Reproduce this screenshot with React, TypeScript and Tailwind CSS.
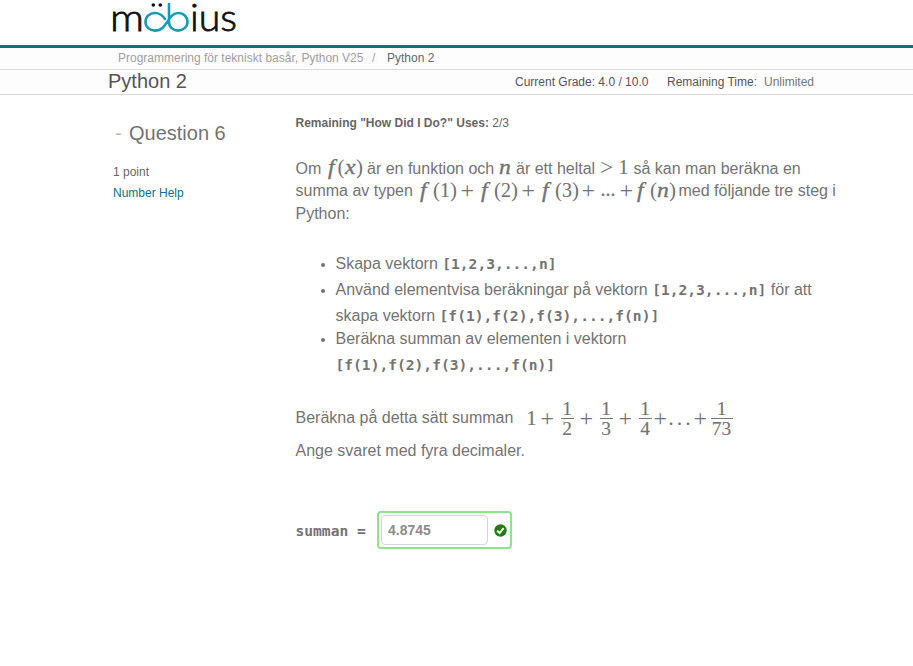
import React from "react";

type TokenProps = { w: string; children: React.ReactNode };

function M({ w, children }: TokenProps) {
  return (
    <span className={`inline-block shrink-0 font-['Liberation_Serif',serif] text-[20px] leading-[22px] [-webkit-text-stroke:0.15px_#737373] ${w}`}>
      {children}
    </span>
  );
}

function Variable({ w, children }: TokenProps) {
  return (
    <span className={`inline-block shrink-0 font-['Liberation_Serif',serif] text-[20px] leading-[22px] italic [-webkit-text-stroke:0.35px_#737373] ${w}`}>
      <span className="inline-block origin-left scale-x-[1.18]">{children}</span>
    </span>
  );
}

function Plus({ w }: { w: string }) {
  return (
    <span className={`inline-block shrink-0 font-['Liberation_Serif',serif] text-[24px] leading-[22px] ${w}`}>+</span>
  );
}

function Paren({ w, children }: TokenProps) {
  return (
    <span className={`inline-block shrink-0 font-['Liberation_Serif',serif] text-[21px] leading-[22px] ${w}`}>
      {children}
    </span>
  );
}

function Greater() {
  return (
    <span className="inline-block w-[18.5px] shrink-0 translate-y-[1px] font-['Liberation_Serif',serif] text-[23px] leading-[22px]">&gt;</span>
  );
}

function Code({ children }: { children: React.ReactNode }) {
  return (
    <code className="font-['DejaVu_Sans_Mono',monospace] text-[14.6px] font-bold">{children}</code>
  );
}

function Call({ arg, variable = false, w }: { arg: string; variable?: boolean; w: string }) {
  return (
    <span className={`inline-flex shrink-0 translate-y-[0.5px] items-baseline ${w}`}>
      <Variable w="w-[14.5px] pl-px">f</Variable>
      <Paren w="w-[7px]">(</Paren>
      {variable ? <Variable w="w-[12px]">{arg}</Variable> : <M w="w-[10px]">{arg}</M>}
      <Paren w="w-[7px]">)</Paren>
    </span>
  );
}

function Fraction({ bottom, w }: { bottom: string; w: string }) {
  return (
    <span
      className={`flex shrink-0 flex-col items-center font-['Liberation_Serif',serif] text-[19.5px] leading-[18px] [-webkit-text-stroke:0.15px_#737373] ${w}`}
    >
      <span className="h-[18px]">1</span>
      <span className="h-px w-full bg-[#777]" />
      <span className="h-[18px] leading-[20px]">{bottom}</span>
    </span>
  );
}

function Logo() {
  return (
    <svg className="overflow-visible font-['Lato',sans-serif] font-light" width="126" height="40" viewBox="0 0 126 40" fill="none" aria-label="möbius">
      <text x="-2" y="30" fontSize="38" textLength="34" lengthAdjust="spacingAndGlyphs" fill="#111" stroke="#111" strokeWidth="0.8">m</text>
      <path
        d="M57 3V21C57 26 61 29.6 66 29.6C71 29.6 75.5 26 75.5 20.8C75.5 15.8 71.5 12 66.5 12C55 12 56 29.6 43 29.6C37.5 29.6 33.5 26 33.5 20.8C33.5 15.8 37.5 12 43 12C48 12 51 15 53 18"
        stroke="#179bb3"
        strokeWidth="2.6"
        strokeLinecap="round"
      />
      <circle cx="41.3" cy="4" r="1.8" fill="#111" />
      <circle cx="48.3" cy="4" r="1.8" fill="#111" />
      <text x="78" y="30" fontSize="38" textLength="47" lengthAdjust="spacingAndGlyphs" fill="#111" stroke="#111" strokeWidth="0.8">ius</text>
    </svg>
  );
}

export default function App() {
  return (
    <div className="h-[666px] w-[913px] overflow-hidden bg-white font-['Liberation_Sans',Arial,sans-serif] text-[#737373]">
      <header className="h-[48px] border-b-[3px] border-[#08728a] pl-[112px] pt-px">
        <Logo />
      </header>
      <nav className="flex h-[22px] items-center border-b border-[#dcdcdc] bg-[#fdfdfd] pb-[2px] pl-[118px] text-[12px] whitespace-nowrap text-[#a39d9d]">
        <span className="w-[254px]">Programmering för tekniskt basår, Python V25</span>
        <span className="w-[15px]">/</span>
        <span className="text-[#666]">Python 2</span>
      </nav>
      <div className="flex h-[25px] items-center border-b border-[#d8d8d8] bg-[#fdfdfd] pl-[108px] whitespace-nowrap text-[#555]">
        <h1 className="w-[407px] pb-[3px] text-[20px] leading-[22px]">Python 2</h1>
        <span className="w-[152px] text-[12px]">Current Grade: 4.0 / 10.0</span>
        <span className="w-[97px] text-[12px]">Remaining Time:</span>
        <span className="text-[12px] text-[#777]">Unlimited</span>
      </div>

      <main className="flex">
        <aside className="w-[295.5px] shrink-0 pl-[113px] pt-[26px]">
          <h2 className="flex h-[24px] items-center text-[20px] leading-6">
            <span className="w-[16px] pl-[2px] text-[#bbb]">-</span>
            <span>Question 6</span>
          </h2>
          <p className="mt-[19px] text-[12px] leading-[16px] text-[#666]">1 point</p>
          <p className="mt-[5px] text-[12px] leading-[16px] text-[#08728a]">Number Help</p>
        </aside>

        <section className="w-[580px] text-[16px] whitespace-nowrap">
          <p className="pt-[20px] text-[12px] leading-[16px] text-[#666]">
            <b>Remaining "How Did I Do?" Uses:</b> 2/3
          </p>

          <div className="mt-[25px]">
            <div className="flex h-[21px] items-baseline leading-[22px]">
              <span className="w-[32px]">Om</span>
              <Variable w="w-[9px]">f</Variable>
              <Paren w="w-[8px] pl-px">(</Paren>
              <Variable w="w-[11.5px]">x</Variable>
              <Paren w="w-[11px]">)</Paren>
              <span className="w-[132px]">är en funktion och</span>
              <Variable w="w-[17px]">n</Variable>
              <span className="w-[84px]">är ett heltal</span>
              <Greater />
              <M w="w-[15px]">1</M>
              <span>så kan man beräkna en</span>
            </div>
            <div className="flex h-[26px] items-baseline leading-[22px]">
              <span className="w-[123px]">summa av typen</span>
              <Call arg="1" w="w-[42px]" />
              <Plus w="w-[19px] translate-y-[2px]" />
              <Call arg="2" w="w-[42px]" />
              <Plus w="w-[19px] translate-y-[2px]" />
              <Call arg="3" w="w-[41px]" />
              <Plus w="w-[19px] translate-y-[2px]" />
              <M w="w-[19px]">...</M>
              <Plus w="w-[16px] translate-y-[2px]" />
              <Call arg="n" variable w="w-[43px]" />
              <span>med följande tre steg i</span>
            </div>
            <p className="leading-[22px]">Python:</p>
          </div>

          <ul className="mt-[26px] list-disc pl-[40px] marker:text-[13px]">
            <li className="h-[26px] leading-[26px]">Skapa vektorn <Code>[1,2,3,...,n]</Code></li>
            <li className="h-[49px] leading-[26px]">
              Använd elementvisa beräkningar på vektorn <Code>[1,2,3,...,n]</Code> för att<br />
              skapa vektorn <Code>[f(1),f(2),f(3),...,f(n)]</Code>
            </li>
            <li className="h-[49px] leading-[26px]">
              Beräkna summan av elementen i vektorn<br />
              <Code>[f(1),f(2),f(3),...,f(n)]</Code>
            </li>
          </ul>

          <div className="mt-[24px] flex h-[38px] items-center">
            <span className="w-[231px]">Beräkna på detta sätt summan</span>
            <M w="w-[14px]">1</M>
            <Plus w="w-[20px]" />
            <Fraction bottom="2" w="mr-[6px] w-[13px]" />
            <Plus w="w-[20px]" />
            <Fraction bottom="3" w="mr-[6px] w-[13px]" />
            <Plus w="w-[20px]" />
            <Fraction bottom="4" w="mr-[2px] w-[13px]" />
            <Plus w="w-[15px]" />
            <M w="w-[25px] tracking-[3.5px]">...</M>
            <Plus w="w-[17px]" />
            <Fraction bottom="73" w="w-[22px]" />
          </div>
          <p className="mt-[3px] leading-[22px]">Ange svaret med fyra decimaler.</p>

          <div className="mt-[49px] flex items-center">
            <span className="w-[81.5px] pt-px font-['DejaVu_Sans_Mono',monospace] text-[14.6px] leading-5 font-bold">
              summan =
            </span>
            <div className="flex h-[38px] w-[135px] items-center rounded-[4px] border-2 border-[#8be58b] pl-[2px]">
              <div className="flex h-[30px] w-[107px] items-center rounded-[4px] border border-[#d5d5d5] pl-[6px] text-[14px] font-bold text-[#8c8c8c]">
                4.8745
              </div>
              <svg className="ml-[6px]" width="13" height="13" viewBox="0 0 13 13" fill="none" aria-label="correct">
                <circle cx="6.5" cy="6.5" r="6.2" fill="#257d0b" />
                <path d="M3.2 6.7L5.6 9L9.6 4.2" stroke="white" strokeWidth="1.9" />
              </svg>
            </div>
          </div>
        </section>
      </main>
    </div>
  );
}
